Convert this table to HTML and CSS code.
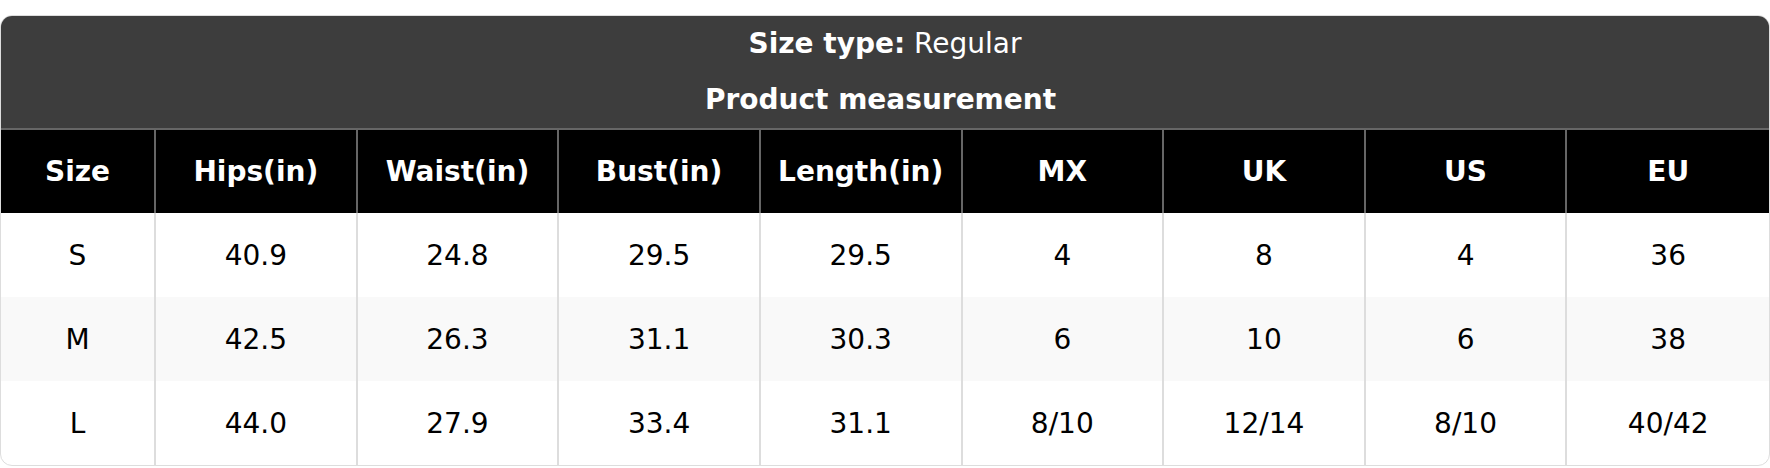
FILE: index.html
```html
<!DOCTYPE html>
<html lang="en">
<head>
<meta charset="utf-8">
<title>Size chart</title>
<link rel="stylesheet" href="styles.css">
</head>
<body>
<div class="chart">
  <div class="title">
    <div class="title-line"><strong>Size type:</strong> Regular</div>
    <div class="title-line title-sub"><strong>Product measurement</strong></div>
  </div>
  <table class="sizes">
    <colgroup>
      <col class="c-first">
      <col><col><col><col><col><col><col><col>
    </colgroup>
    <thead>
      <tr>
        <th>Size</th><th>Hips(in)</th><th>Waist(in)</th><th>Bust(in)</th><th>Length(in)</th><th>MX</th><th>UK</th><th>US</th><th>EU</th>
      </tr>
    </thead>
    <tbody>
      <tr>
        <td>S</td><td>40.9</td><td>24.8</td><td>29.5</td><td>29.5</td><td>4</td><td>8</td><td>4</td><td>36</td>
      </tr>
      <tr class="alt">
        <td>M</td><td>42.5</td><td>26.3</td><td>31.1</td><td>30.3</td><td>6</td><td>10</td><td>6</td><td>38</td>
      </tr>
      <tr>
        <td>L</td><td>44.0</td><td>27.9</td><td>33.4</td><td>31.1</td><td>8/10</td><td>12/14</td><td>8/10</td><td>40/42</td>
      </tr>
    </tbody>
  </table>
</div>
</body>
</html>
```
FILE: styles.css
```css
html, body {
  margin: 0;
  padding: 0;
  background: #ffffff;
}

body {
  font-family: "DejaVu Sans", "Liberation Sans", sans-serif;
  font-size: 28px;
  color: #000000;
}

.chart {
  margin-top: 15px;
  border: 1px solid #dddddd;
  border-radius: 12px;
  overflow: hidden;
}

.title {
  background: #3d3d3d;
  color: #ffffff;
}

.title-line {
  height: 56px;
  line-height: 56px;
  text-align: center;
  font-weight: normal;
}

.title-sub {
  padding-right: 9px;
}

.title-line strong {
  font-weight: bold;
}

.sizes {
  width: 100%;
  table-layout: fixed;
  border-collapse: separate;
  border-spacing: 0;
}

.c-first {
  width: 155px;
}

.sizes th,
.sizes td {
  padding: 0;
  text-align: center;
  vertical-align: middle;
  box-sizing: border-box;
}

.sizes th {
  background: #000000;
  color: #ffffff;
  font-weight: bold;
  height: 85px;
  border-top: 2px solid #666666;
  border-right: 2px solid #666666;
}

.sizes th:last-child {
  border-right: none;
}

.sizes td {
  height: 84px;
  border-right: 2px solid #dddddd;
  color: #000000;
}

.sizes td:last-child {
  border-right: none;
}

.sizes tr.alt td {
  background: #f9f9f9;
}
```
